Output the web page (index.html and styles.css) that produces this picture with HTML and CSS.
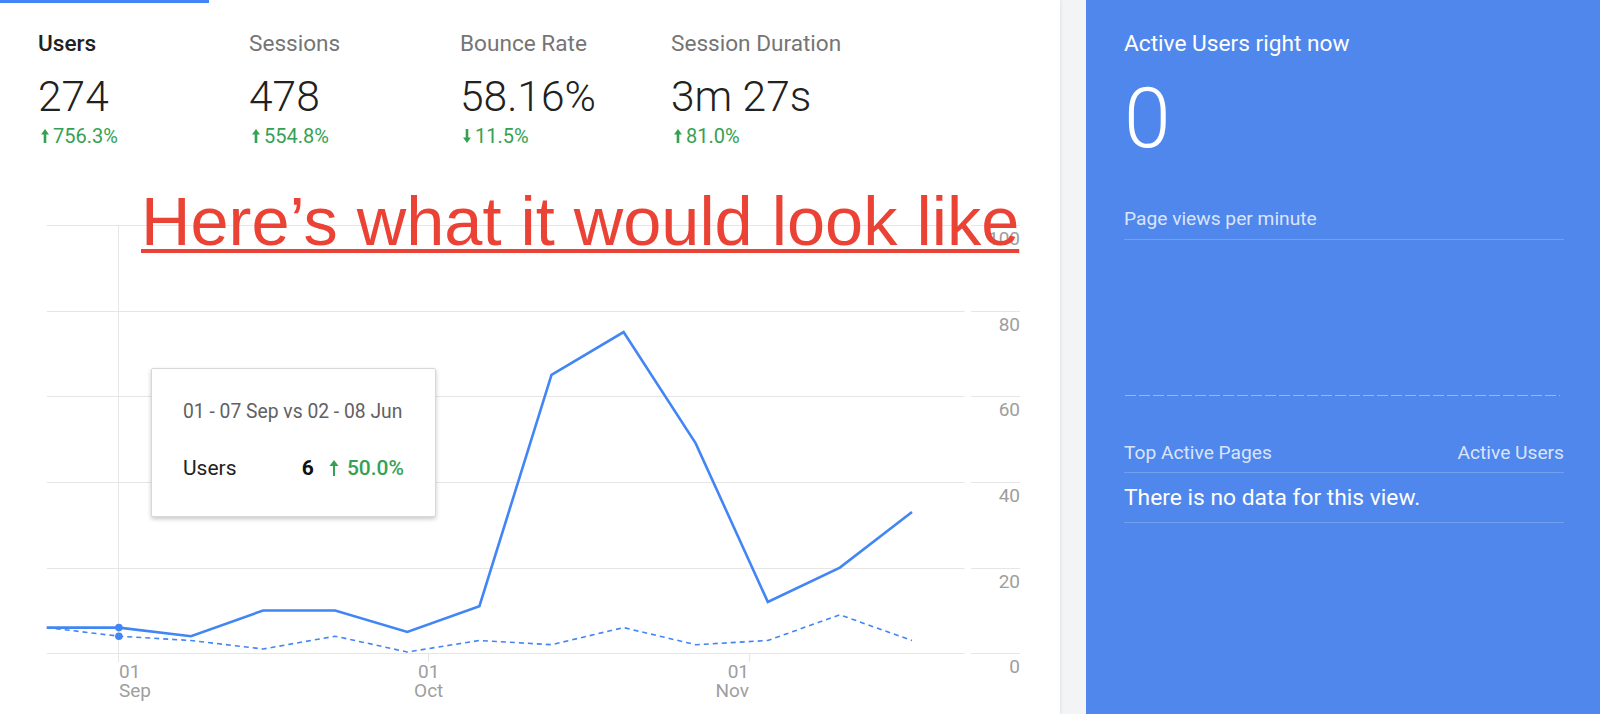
FILE: index.html
```html
<!DOCTYPE html>
<html lang="en">
<head>
    <meta charset="UTF-8">
    <meta name="viewport" content="width=device-width, initial-scale=1.0">
    <title>Audience Overview</title>
    <link rel="stylesheet" href="styles.css">
</head>
<body>
    <div class="page">
        <section class="report">
            <div class="tab-indicator"></div>

            <div class="stats">
                <div class="stat stat-active">
                    <div class="stat-label">Users</div>
                    <div class="stat-value">274</div>
                    <div class="stat-change">
                        <svg class="arrow" viewBox="0 0 8 14"><path d="M4 0L8 5.5H5.3V14H2.7V5.5H0Z"/></svg>
                        756.3%
                    </div>
                </div>
                <div class="stat">
                    <div class="stat-label">Sessions</div>
                    <div class="stat-value">478</div>
                    <div class="stat-change">
                        <svg class="arrow" viewBox="0 0 8 14"><path d="M4 0L8 5.5H5.3V14H2.7V5.5H0Z"/></svg>
                        554.8%
                    </div>
                </div>
                <div class="stat">
                    <div class="stat-label">Bounce Rate</div>
                    <div class="stat-value">58.16%</div>
                    <div class="stat-change">
                        <svg class="arrow" viewBox="0 0 8 14"><path d="M4 14L8 8.5H5.3V0H2.7V8.5H0Z"/></svg>
                        11.5%
                    </div>
                </div>
                <div class="stat">
                    <div class="stat-label">Session Duration</div>
                    <div class="stat-value">3m 27s</div>
                    <div class="stat-change">
                        <svg class="arrow" viewBox="0 0 8 14"><path d="M4 0L8 5.5H5.3V14H2.7V5.5H0Z"/></svg>
                        81.0%
                    </div>
                </div>
            </div>

            <div class="chart">
                <svg class="chart-svg" width="1060" height="534" viewBox="0 180 1060 534">
                    <path class="grid" d="M46.8 225.5H964.5M46.8 311.5H964.5M46.8 396.5H964.5M46.8 482.5H964.5M46.8 568.5H964.5M46.8 653.5H964.5
                        M971 225.5H1020M971 311.5H1020M971 396.5H1020M971 482.5H1020M971 568.5H1020M971 653.5H1020
                        M118.5 225V662M428.5 653V662M749.5 653V662"/>

                    <g class="axis-label y-axis">
                        <text x="1020" y="245">100</text>
                        <text x="1020" y="331">80</text>
                        <text x="1020" y="416">60</text>
                        <text x="1020" y="502">40</text>
                        <text x="1020" y="588">20</text>
                        <text x="1020" y="673">0</text>
                    </g>

                    <g class="axis-label">
                        <text x="119" y="678">01</text>
                        <text x="119" y="697">Sep</text>
                        <text x="428.7" y="678" text-anchor="middle">01</text>
                        <text x="428.7" y="697" text-anchor="middle">Oct</text>
                        <text x="749" y="678" text-anchor="end">01</text>
                        <text x="749" y="697" text-anchor="end">Nov</text>
                    </g>

                    <!-- 02 Jun - 01 Sep, previous period -->
                    <polyline class="line-prev" points="46.8,627.6 118.9,636.2 191,640.5 263.1,649 335.2,636.2 407.3,652 479.4,640.5 551.5,644.7 623.6,627.6 695.7,644.7 767.8,640.5 839.9,614.8 912,640.5"/>
                    <polyline class="line-cur" points="46.8,627.6 118.9,627.6 191,636.2 263.1,610.5 335.2,610.5 407.3,631.9 479.4,606.2 551.5,374.9 623.6,332.1 695.7,443.4 767.8,601.9 839.9,567.6 912,512"/>
                    <circle class="dot" cx="118.9" cy="627.6" r="3.8"/>
                    <circle class="dot" cx="118.9" cy="636.2" r="3.8"/>
                </svg>

                <div class="tooltip">
                    <div class="tooltip-date">01 - 07 Sep vs 02 - 08 Jun</div>
                    <div class="tooltip-row">
                        <span class="tooltip-metric">Users</span>
                        <span class="tooltip-value">6</span>
                        <span class="tooltip-change">
                            <svg class="arrow-thin" viewBox="0 0 10 16"><path d="M5 0L9.5 6H6V16H4V6H0.5Z"/></svg>
                            50.0%
                        </span>
                    </div>
                </div>

                <h2 class="annotation">Here’s what it would look like</h2>
            </div>
        </section>

        <aside class="realtime">
            <div class="rt-title">Active Users right now</div>
            <div class="rt-count">0</div>
            <div class="rt-sub">Page views per minute</div>
            <div class="rt-chart"></div>
            <div class="rt-head">
                <span>Top Active Pages</span>
                <span>Active Users</span>
            </div>
            <div class="rt-empty">There is no data for this view.</div>
        </aside>
    </div>
</body>
</html>
```

FILE: styles.css
```css
body {
    margin: 0;
    background: #f3f4f6;
    font-family: Roboto, "Noto Sans", sans-serif;
}
.page {
    display: flex;
    gap: 26px;
    height: 714px;
    overflow: hidden;
}

/* left report card */
.report {
    flex: none;
    width: 1060px;
    background: #fff;
    box-shadow: 1px 0 3px rgba(0, 0, 0, 0.08);
}
.tab-indicator {
    width: 209px;
    height: 3px;
    background: #4285f4;
}
.stats {
    display: grid;
    grid-template-columns: repeat(4, 211px);
    height: 177px;
    box-sizing: border-box;
    padding: 28px 0 0 38px;
}
.stat-label {
    font-size: 22.6px;
    line-height: 26px;
    color: #757575;
}
.stat-active .stat-label {
    color: #212121;
    font-weight: 500;
}
.stat-value {
    margin-top: 15px;
    font-size: 42.5px;
    line-height: 49px;
    font-weight: 300;
    color: #212121;
}
.stat-change {
    display: flex;
    align-items: center;
    gap: 4px;
    margin-top: 4px;
    font-size: 20px;
    line-height: 22px;
    color: #36a154;
}
.arrow {
    width: 8px;
    height: 14px;
    margin-left: 3px;
    fill: currentColor;
}

/* chart */
.chart {
    position: relative;
    height: 534px;
}
.chart-svg {
    display: block;
}
.grid {
    fill: none;
    stroke: #e6e6e6;
    stroke-width: 1;
}
.axis-label {
    font-family: Roboto, sans-serif;
    font-size: 19px;
    fill: #9e9e9e;
}
.y-axis {
    text-anchor: end;
}
.line-cur {
    fill: none;
    stroke: #4285f4;
    stroke-width: 2.6;
}
.line-prev {
    fill: none;
    stroke: #4285f4;
    stroke-width: 1.6;
    stroke-dasharray: 5 4;
}
.dot {
    fill: #4285f4;
}

.tooltip {
    position: absolute;
    left: 151px;
    top: 188px;
    width: 285px;
    height: 149px;
    box-sizing: border-box;
    padding: 32px 30px 0 31px;
    background: #fff;
    border: 1px solid #d8d8d8;
    border-radius: 2px;
    box-shadow: 0 2px 4px rgba(0, 0, 0, 0.22);
}
.tooltip-date {
    font-size: 19.3px;
    line-height: 22px;
    white-space: nowrap;
    color: #616161;
}
.tooltip-row {
    display: flex;
    align-items: center;
    margin-top: 33px;
    margin-right: 1px;
    font-size: 21px;
    line-height: 24px;
}
.tooltip-metric {
    flex: 1;
    color: #212121;
}
.tooltip-value {
    margin-right: 15px;
    font-weight: 700;
    color: #111;
}
.tooltip-change {
    display: flex;
    align-items: center;
    gap: 8px;
    font-weight: 500;
    color: #36a154;
}
.arrow-thin {
    width: 10px;
    height: 16px;
    fill: currentColor;
}

.annotation {
    position: absolute;
    left: 141px;
    top: 8px;
    margin: 0;
    font-family: "Liberation Sans", Arial, sans-serif;
    font-size: 68.5px;
    line-height: 1;
    font-weight: normal;
    white-space: nowrap;
    color: #ea4335;
    text-decoration: underline;
    text-decoration-thickness: 4px;
    text-underline-offset: 4px;
}

/* right realtime card */
.realtime {
    flex: 1;
    padding: 31px 36px 0 38px;
    background: #5087ec;
    color: #fff;
}
.rt-title {
    font-size: 22.7px;
    line-height: 26px;
}
.rt-count {
    margin-top: 20px;
    font-size: 84px;
    line-height: 84px;
    font-weight: 300;
}
.rt-sub {
    margin-top: 47px;
    padding-bottom: 9px;
    font-size: 19.2px;
    line-height: 22px;
    color: rgba(255, 255, 255, 0.8);
    border-bottom: 1px solid rgba(255, 255, 255, 0.2);
}
.rt-chart {
    height: 156px;
    margin: 0 4px 46px 1px;
    background-image: repeating-linear-gradient(to right, rgba(255, 255, 255, 0.4) 0 11px, transparent 11px 14px);
    background-size: 100% 1px;
    background-position: bottom;
    background-repeat: no-repeat;
}
.rt-head {
    display: flex;
    justify-content: space-between;
    padding-bottom: 8px;
    font-size: 19.2px;
    line-height: 22px;
    color: rgba(255, 255, 255, 0.8);
    border-bottom: 1px solid rgba(255, 255, 255, 0.2);
}
.rt-empty {
    padding: 12px 0 11px;
    font-size: 22.8px;
    line-height: 26px;
    border-bottom: 1px solid rgba(255, 255, 255, 0.2);
}
```
